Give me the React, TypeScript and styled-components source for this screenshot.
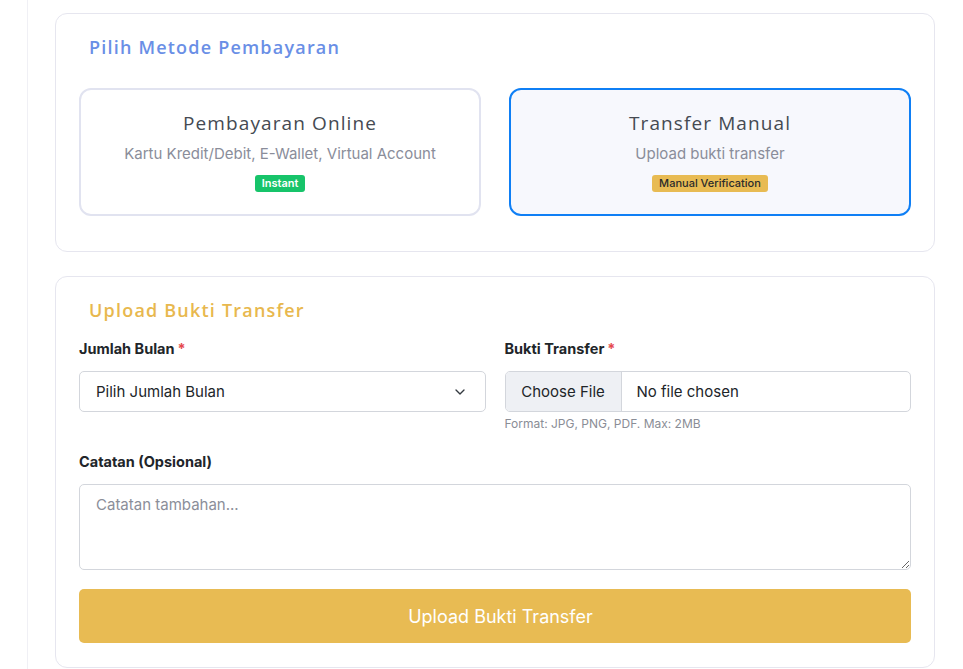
import React from 'react'
import styled, { createGlobalStyle } from 'styled-components';
import { ChevronDown } from 'lucide-react';

const Global = createGlobalStyle`
  html, body {
    margin: 0;
    padding: 0;
    background: #fff;
    font-family: Inter, "Liberation Sans", sans-serif;
    color: #212529;
  }
  * { box-sizing: border-box; }
`

const Page = styled.div`
  display: flex;
  min-height: 669px;
`

const Gutter = styled.div`
  width: 28px;
  flex: 0 0 28px;
  border-right: 1px solid #f0f0f5;
`

const Main = styled.main`
  flex: 1 1 auto;
  padding: 13px 28px 0 27px;
  display: flex;
  flex-direction: column;
  gap: 24px;
`

const Card = styled.section<{ $bottom?: number }>`
  border: 1px solid #e6e6ef;
  border-radius: 12px;
  background: #fff;
  padding: 23px 23px ${p => p.$bottom ?? 23}px;
`

const Heading = styled.h3<{ $color: 'blue' | 'yellow' }>`
  margin: 0 0 ${p => p.$color === 'blue' ? 31 : 19}px;
  padding-left: 10px;
  font-family: "Open Sans", "DejaVu Sans", sans-serif;
  font-weight: 600;
  font-size: 18px;
  line-height: 20px;
  letter-spacing: 1.2px;
  color: ${p => p.$color === 'blue' ? '#6a8fe6' : '#e8b84e'};
`

const Options = styled.div`
  display: grid;
  grid-template-columns: 1fr 1fr;
  column-gap: 28px;
`

const Option = styled.div<{ $active?: boolean }>`
  height: 128px;
  border: 2px solid ${p => p.$active ? '#0f7ff5' : '#e1e3f0'};
  background: ${p => p.$active ? '#f7f8fd' : '#fff'};
  border-radius: 12px;
  padding: 22px 16px;
  display: flex;
  flex-direction: column;
  align-items: center;
  text-align: center;
`

const OptionTitle = styled.div`
  font-family: "Open Sans", "DejaVu Sans", sans-serif;
  font-weight: 500;
  font-size: 19px;
  line-height: 22px;
  letter-spacing: 1.1px;
  color: #454a52;
`

const OptionText = styled.div`
  margin-top: 10px;
  font-size: 15px;
  line-height: 20px;
  color: #8a8d9a;
`

const Badge = styled.span<{ $tone: 'green' | 'yellow' }>`
  margin-top: 11px;
  height: 17px;
  padding: 0 7px;
  border-radius: 3px;
  font-size: 11px;
  line-height: 17px;
  font-weight: ${p => p.$tone === 'green' ? 600 : 500};
  background: ${p => p.$tone === 'green' ? '#17c46a' : '#e8bb53'};
  color: ${p => p.$tone === 'green' ? '#fff' : '#2b2b2b'};
`

const FormGrid = styled.div`
  display: grid;
  grid-template-columns: 1fr 1fr;
  column-gap: 19px;
`

const Field = styled.div<{ $span?: boolean }>`
  display: flex;
  flex-direction: column;
  grid-column: ${p => p.$span ? '1 / -1' : 'auto'};
  margin-bottom: ${p => p.$span ? 19 : 0}px;
`

const Label = styled.label<{ $top?: number }>`
  font-size: 14.5px;
  font-weight: 700;
  line-height: 20px;
  color: #212529;
  margin-bottom: 12px;
  margin-top: ${p => p.$top ?? 0}px;

  span { color: #e5484d; margin-left: 3px; }
`

const SelectWrap = styled.div`
  position: relative;
  height: 41px;

  svg {
    position: absolute;
    right: 18px;
    top: 13px;
    pointer-events: none;
    color: #343a40;
  }
`

const Select = styled.select`
  appearance: none;
  width: 100%;
  height: 41px;
  border: 1px solid #d3d6dc;
  border-radius: 5px;
  background: #fff;
  padding: 0 40px 0 16px;
  font-family: Inter, "Liberation Sans", sans-serif;
  font-size: 15px;
  color: #212529;
`

const FileInput = styled.input`
  width: 100%;
  height: 41px;
  border: 1px solid #d3d6dc;
  border-radius: 5px;
  background: #fff;
  padding: 0;
  font-family: Inter, "Liberation Sans", sans-serif;
  font-size: 15px;
  color: #212529;
  overflow: hidden;

  &::file-selector-button {
    height: 39px;
    width: 116px;
    margin: 0 15px 0 0;
    border: 0;
    border-right: 1px solid #d3d6dc;
    background: #eef0f4;
    font-family: Inter, "Liberation Sans", sans-serif;
    font-size: 15px;
    color: #212529;
  }
`

const Help = styled.small`
  margin-top: 4px;
  font-size: 12px;
  line-height: 16px;
  color: #8a8d96;
`

const TextArea = styled.textarea`
  height: 86px;
  border: 1px solid #d3d6dc;
  border-radius: 5px;
  padding: 10px 16px;
  font-family: Inter, "Liberation Sans", sans-serif;
  font-size: 15px;
  line-height: 20px;
  color: #212529;

  &::placeholder { color: #8b8e99; }
`

const Submit = styled.button`
  grid-column: 1 / -1;
  height: 54px;
  border: 0;
  border-radius: 5px;
  background: #e8bb53;
  color: #fff;
  padding: 0 0 0 11px;
  font-family: Inter, "Liberation Sans", sans-serif;
  font-size: 18px;
`

export default function App() {
  return (
    <Page>
      <Global />
      <Gutter />
      <Main>
        <Card $bottom={35}>
          <Heading $color="blue">Pilih Metode Pembayaran</Heading>
          <Options>
            <Option>
              <OptionTitle>Pembayaran Online</OptionTitle>
              <OptionText>Kartu Kredit/Debit, E-Wallet, Virtual Account</OptionText>
              <Badge $tone="green">Instant</Badge>
            </Option>
            <Option $active>
              <OptionTitle>Transfer Manual</OptionTitle>
              <OptionText>Upload bukti transfer</OptionText>
              <Badge $tone="yellow">Manual Verification</Badge>
            </Option>
          </Options>
        </Card>

        <Card $bottom={24}>
          <Heading $color="yellow">Upload Bukti Transfer</Heading>
          <FormGrid>
            <Field>
              <Label>Jumlah Bulan<span>*</span></Label>
              <SelectWrap>
                <Select defaultValue="">
                  <option value="">Pilih Jumlah Bulan</option>
                  <option value="1">1 Bulan</option>
                  <option value="3">3 Bulan</option>
                  <option value="6">6 Bulan</option>
                  <option value="12">12 Bulan</option>
                </Select>
                <ChevronDown size={16} strokeWidth={2} />
              </SelectWrap>
            </Field>
            <Field>
              <Label>Bukti Transfer<span>*</span></Label>
              <FileInput type="file" accept=".jpg,.png,.pdf" />
              <Help>Format: JPG, PNG, PDF. Max: 2MB</Help>
            </Field>
            <Field $span>
              <Label $top={20}>Catatan (Opsional)</Label>
              <TextArea placeholder="Catatan tambahan..." />
            </Field>
            <Submit>Upload Bukti Transfer</Submit>
          </FormGrid>
        </Card>
      </Main>
    </Page>
  )
}
